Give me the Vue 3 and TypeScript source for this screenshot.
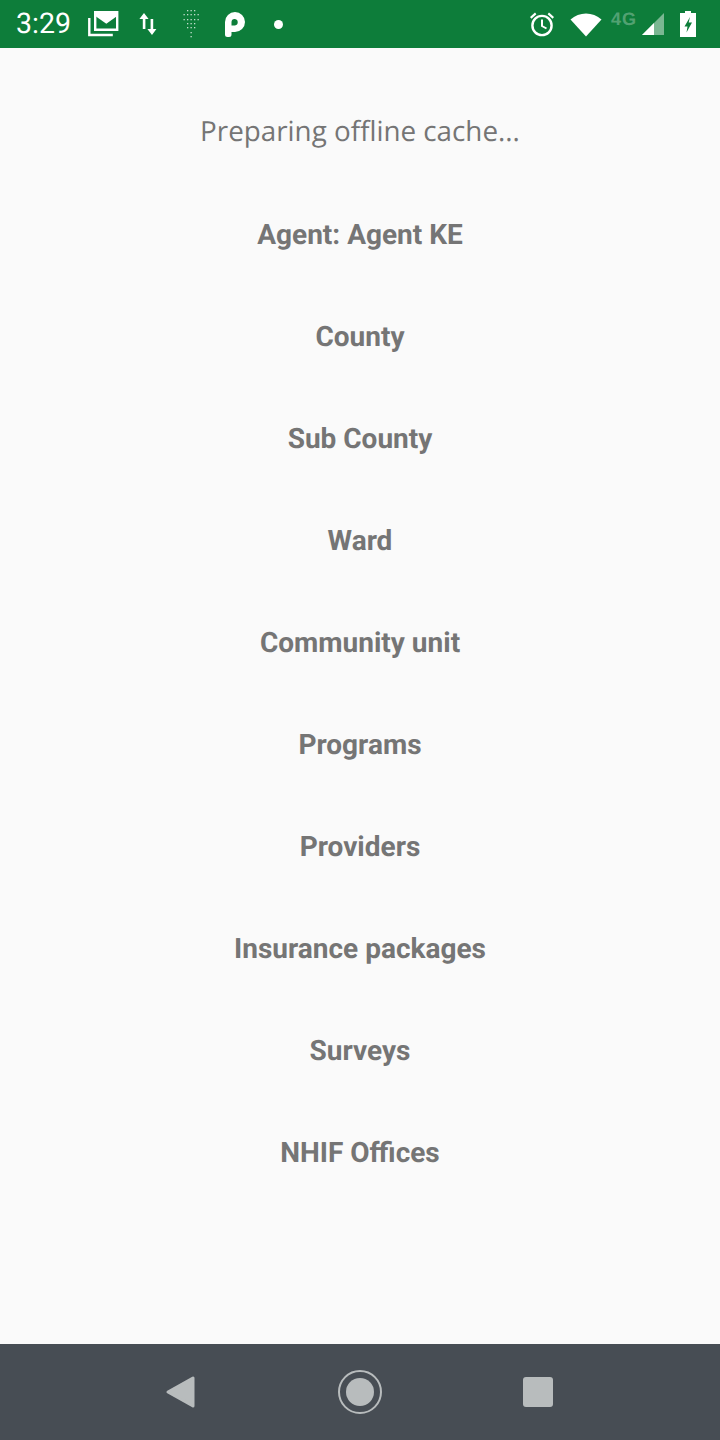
<script setup lang="ts">
const steps = [
  'Agent: Agent KE',
  'County',
  'Sub County',
  'Ward',
  'Community unit',
  'Programs',
  'Providers',
  'Insurance packages',
  'Surveys',
  'NHIF Offices',
]

// faint dotted wedge in the status bar: [y, half width in columns]
const wedge: [number, number][] = [
  [0, 1],
  [4, 2],
  [9, 2],
  [13, 1],
  [17, 1],
  [22, 0],
  [26, 0],
]
const dots: { x: number; y: number }[] = []
for (const [y, half] of wedge) {
  for (let c = -half; c <= half; c++) dots.push({ x: 7.5 + c * 3.5, y })
}
</script>

<template>
  <div class="screen">
    <header class="status-bar">
      <div class="status-left">
        <span class="clock">3:29</span>
        <svg class="ic-mail" width="32" height="26" viewBox="0 0 32 26">
          <path d="M7.200 1.200h22v17.600h-22z" fill="none" stroke="#fff" stroke-width="2.400" />
          <path d="M8 2h20.500v3.400l-10.200 7.400L8 5.400z" fill="#fff" />
          <path d="M1.300 7v17h23.500" fill="none" stroke="#fff" stroke-width="2.400" />
        </svg>
        <svg class="ic-data" width="20" height="24" viewBox="0 0 20 24">
          <path d="M6 1l4.600 6H7.400v10H4.800V7H1.400zM14 23l-4.600-6h3.200V7h2.600v10h3.200z" fill="#fff" />
        </svg>
        <svg class="ic-dots" width="16" height="28" viewBox="0 0 16 28">
          <rect v-for="d in dots" :key="d.x + '-' + d.y" :x="d.x" :y="d.y" width="1.300" height="1.300" fill="#fff" opacity="0.75" />
        </svg>
        <svg class="ic-p" width="22" height="26" viewBox="0 0 22 26">
          <path fill-rule="evenodd" d="M1 11a10 10 0 1 1 10 10H7.500v2.500A2.500 2.500 0 0 1 5 26H3.500A2.500 2.500 0 0 1 1 23.500zM11 8a3.200 3.200 0 0 0-3.500 3v3.500H11a3.300 3.300 0 0 0 0-6.500z" fill="#fff" />
        </svg>
        <span class="dot"></span>
      </div>
      <div class="status-right">
        <svg class="ic-alarm" width="26" height="26" viewBox="0 0 26 26">
          <circle cx="13" cy="14.500" r="9.600" fill="none" stroke="#fff" stroke-width="2.400" />
          <path d="M13 8.500v6.500l4.500 2.500" fill="none" stroke="#fff" stroke-width="2" />
          <path d="M1 6l5-4.500 1.400 1.700-5 4.500zM25 6l-5-4.500-1.400 1.700 5 4.500z" fill="#fff" />
        </svg>
        <svg class="ic-wifi" width="32" height="25" viewBox="0 0 32 25">
          <path d="M0.500 7.500C9 -0.500 23 -0.500 31.500 7.500L16 24.500z" fill="#fff" />
        </svg>
        <span class="net">4G</span>
        <svg class="ic-signal" width="24" height="24" viewBox="0 0 24 24">
          <path d="M1 23L23 1v22z" fill="#fff" opacity="0.45" />
          <path d="M1 23l12-12v12z" fill="#fff" />
        </svg>
        <svg class="ic-battery" width="16" height="26" viewBox="0 0 16 26">
          <path fill-rule="evenodd" d="M5 0h6v2h5v24H0V2h5zM10 6L4.500 15.500h3l-1 6 5.500-10h-3.300z" fill="#fff" />
        </svg>
      </div>
    </header>

    <main class="content">
      <p class="title">Preparing offline cache...</p>
      <p v-for="step in steps" :key="step" class="step">{{ step }}</p>
    </main>

    <footer class="nav-bar">
      <svg width="32" height="34" viewBox="0 0 32 34">
        <path d="M28 3v28L3 17z" fill="#b8bcbd" stroke="#b8bcbd" stroke-width="3" stroke-linejoin="round" />
      </svg>
      <svg width="44" height="44" viewBox="0 0 44 44">
        <circle cx="22" cy="22" r="21" fill="none" stroke="#b8bcbd" stroke-width="2" />
        <circle cx="22" cy="22" r="14" fill="#b8bcbd" />
      </svg>
      <span class="recents"></span>
    </footer>
  </div>
</template>

<style scoped>
.screen {
  display: flex;
  flex-direction: column;
  width: 720px;
  height: 1440px;
  background: #fafafa;
  font-family: Roboto, sans-serif;
  text-rendering: geometricPrecision;
}
.status-bar {
  display: flex;
  justify-content: space-between;
  align-items: center;
  height: 48px;
  background: #0d7d3a;
  color: #fff;
}
.status-left,
.status-right {
  display: flex;
  align-items: center;
}
.status-left {
  padding-left: 16px;
}
.clock {
  width: 72px;
  font-size: 28.500px;
  line-height: 48px;
}
.ic-data {
  margin-left: 18px;
}
.ic-dots {
  margin-left: 25px;
}
.ic-p {
  margin-left: 25px;
}
.dot {
  width: 9px;
  height: 9px;
  margin-left: 28px;
  border-radius: 50%;
  background: #fff;
}
.status-right {
  padding-right: 24px;
}
.ic-wifi {
  margin-left: 15px;
}
.net {
  width: 28px;
  margin: -9px 0 0 9px;
  font-family: "Liberation Sans", sans-serif;
  font-size: 18px;
  font-weight: 700;
  letter-spacing: 1px;
  color: rgba(255, 255, 255, 0.3);
}
.ic-signal {
  margin-left: 2px;
}
.ic-battery {
  margin-left: 15px;
}
.content {
  flex: 1;
  display: flex;
  flex-direction: column;
  align-items: center;
  padding-top: 63px;
}
.title {
  margin: 0;
  height: 104px;
  font-family: "Open Sans", sans-serif;
  font-size: 27.800px;
  line-height: 40px;
  color: #757575;
}
.step {
  margin: 0;
  height: 102px;
  font-size: 28px;
  line-height: 40px;
  font-weight: 700;
  color: #757575;
}
.nav-bar {
  display: flex;
  justify-content: center;
  align-items: center;
  gap: 141px;
  height: 96px;
  padding-right: 2px;
  background: #474d54;
}
.recents {
  width: 30px;
  height: 30px;
  border-radius: 3px;
  background: #b8bcbd;
}
</style>

<style>
html,
body {
  margin: 0;
  background: #fafafa;
}
</style>
